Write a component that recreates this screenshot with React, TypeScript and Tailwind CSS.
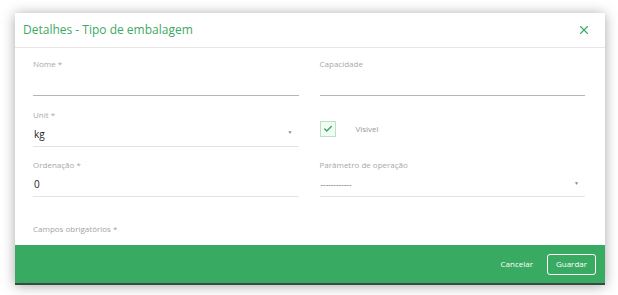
import { X, Check } from 'lucide-react'

const font = { fontFamily: '"Open Sans", "Liberation Sans", sans-serif' }

function Field({ label, value, select, dark }: { label: string; value?: string; select?: boolean; dark?: boolean }) {
  return (
    <div className="flex flex-col">
      <label className="text-[8px] leading-[12px] text-[#a8a8a8]">{label}</label>
      <div className={`h-[26px] flex items-center justify-between border-b ${dark ? 'border-[#b5b5b5]' : 'border-[#e3e3e3]'} pl-[1px] pr-[6px]`}>
        <span className={select && value?.startsWith('-') ? 'text-[8px] text-[#555]' : 'text-[10px] text-[#222] pt-[2px]'}>{value}</span>
        {select && <span className="text-[5px] text-[#888]">▼</span>}
      </div>
    </div>
  )
}

export default function App() {
  return (
    <main className="w-[618px] h-[295px] bg-white pt-[13px] pl-[15px]" style={font}>
      <div className="w-[590px] h-[272px] bg-white flex flex-col shadow-[0_1px_12px_rgba(0,0,0,0.35)]">
        <div className="h-[35px] flex items-center justify-between pl-[8px] pr-[14px] border-b border-[#e6e6e6]">
          <h2 className="text-[12px] text-[#3aaa63]">Detalhes - Tipo de embalagem</h2>
          <X size={14} strokeWidth={2} className="text-[#3aaa63]" />
        </div>

        <div className="flex-1 pt-[10px] px-[18px] pr-[20px]">
          <div className="grid grid-cols-2 gap-x-[21px] gap-y-[12.5px]">
            <Field label="Nome *" dark />
            <Field label="Capacidade" dark />
            <Field label="Unit *" value="kg" select />
            <div className="flex items-center gap-[20px] pt-[12px] pb-[10px]">
              <div className="w-[16px] h-[16px] border border-[#b9e2c6] bg-[#f3fbf5] flex items-center justify-center">
                <Check size={10} strokeWidth={3.5} className="text-[#3aaa63]" />
              </div>
              <span className="text-[8px] text-[#999]">Visível</span>
            </div>
            <Field label="Ordenação *" value="0" />
            <Field label="Parâmetro de operação" value="------------" select />
          </div>
          <p className="mt-[26px] text-[8px] text-[#a3a3a3]">Campos obrigatórios *</p>
        </div>

        <div className="h-[40px] bg-[#38aa62] border-b-[2px] border-[#3b4a40] flex items-center justify-end gap-[14px] pr-[9px]">
          <button className="text-[8px] text-white">Cancelar</button>
          <button className="h-[21px] px-[8px] border border-white rounded-[3px] text-[8px] text-white">Guardar</button>
        </div>
      </div>
    </main>
  )
}
